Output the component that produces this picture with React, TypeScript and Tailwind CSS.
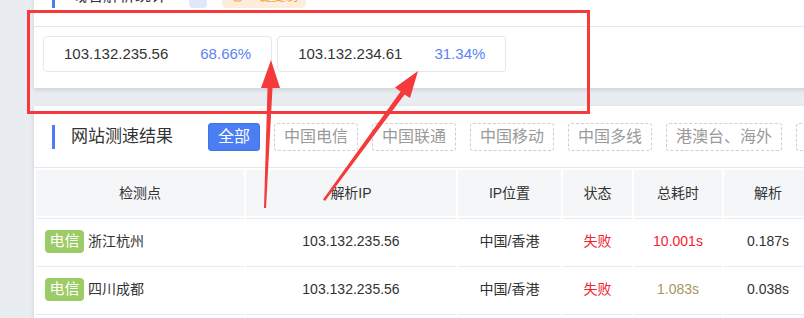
import React from 'react';
import { Copy } from 'lucide-react';

const ipStats = [
  { ip: '103.132.235.56', pct: '68.66%' },
  { ip: '103.132.234.61', pct: '31.34%' },
];

const lines = ['全部', '中国电信', '中国联通', '中国移动', '中国多线', '港澳台、海外', '其他'];

const rows = [
  { isp: '电信', city: '浙江杭州', ip: '103.132.235.56', loc: '中国/香港', status: '失败', total: '10.001s', slow: true, dns: '0.187s' },
  { isp: '电信', city: '四川成都', ip: '103.132.235.56', loc: '中国/香港', status: '失败', total: '1.083s', slow: false, dns: '0.038s' },
  { isp: '电信', city: '江苏南京', ip: '103.132.235.56', loc: '中国/香港', status: '失败', total: '0.912s', slow: false, dns: '0.041s' },
];

const thClass = 'h-[46px] bg-[#f5f6f8] text-[14px] font-normal text-[#333] text-center';
const tdClass = 'h-[46px] border-t border-[#e4ebf2] text-[14px] text-center';

function IpStat({ ip, pct }: { ip: string; pct: string }) {
  return (
    <div className="flex h-9 items-center gap-[32px] rounded border border-[#e4e7ec] pl-5 pr-5">
      <span className="text-[15px] text-[#333]">{ip}</span>
      <span className="text-[15px] text-[#5a84f5]">{pct}</span>
    </div>
  );
}

function Arrows() {
  return (
    <svg className="pointer-events-none absolute inset-0" width={804} height={318} viewBox="0 0 804 318">
      <polygon
        fill="#f43a3a"
        points="271,60 280,88 272.5,88 266,208 264,208 267.5,88 261,88"
      />
      <polygon
        fill="#f43a3a"
        points="418,71 410,98 404.6,94.5 325,201 323,199.5 400.6,91.5 395,87.5"
      />
    </svg>
  );
}

export default function App() {
  return (
    <div className="relative h-[318px] w-[804px] overflow-hidden bg-[#e9edf2] font-['Liberation_Sans','Noto_Sans_CJK_SC',sans-serif] text-[#333]">
      <div className="ml-[34px] -mt-[35px] flex w-[1000px] flex-col gap-[18px]">
        {/* 域名解析统计 */}
        <div className="bg-white shadow-[0_2px_5px_rgba(0,0,0,0.12)]">
          <div className="flex h-[62px] items-center border-b border-[#e4e7ec] pl-[18px]">
            <span className="h-6 w-[3px] bg-[#4b7cf3]" />
            <span className="ml-4 text-[16px]">域名解析统计</span>
            <span className="ml-[22px] flex h-6 w-[18px] items-center justify-center rounded bg-[#dfe8fb] text-[13px] text-[#4b7cf3]">
              2
            </span>
            <span className="ml-[15px] flex h-6 items-center gap-1 rounded bg-[#fdeedc] px-2 text-[13px] text-[#f39a36]">
              <Copy size={12} />
              一键复制
            </span>
          </div>
          <div className="flex gap-[5px] px-[9px] pt-[9px] pb-4">
            {ipStats.map((s) => (
              <IpStat key={s.ip} ip={s.ip} pct={s.pct} />
            ))}
          </div>
        </div>

        {/* 网站测速结果 */}
        <div className="bg-white shadow-[0_2px_5px_rgba(0,0,0,0.12)]">
          <div className="flex h-[62px] items-center border-b border-[#e4e7ec] pl-[18px]">
            <span className="h-6 w-[3px] bg-[#4b7cf3]" />
            <span className="ml-4 text-[17px]">网站测速结果</span>
            <div className="ml-[35px] flex gap-[14px]">
              {lines.map((l, i) => (
                <button
                  key={l}
                  className={
                    i === 0
                      ? 'h-7 rounded-[3px] border border-[#3f73e6] bg-[#4a7ef2] px-[9px] text-[16px] text-white'
                      : 'h-7 rounded-[3px] border border-dashed border-[#cfcfcf] bg-white px-[9px] text-[16px] text-[#9a9a9a]'
                  }
                >
                  {l}
                </button>
              ))}
            </div>
          </div>
          <table className="w-[900px] table-fixed border-separate border-spacing-0.5">
            <thead>
              <tr>
                <th className={`${thClass} w-[208px]`}>检测点</th>
                <th className={`${thClass} w-[210px]`}>解析IP</th>
                <th className={`${thClass} w-[103px]`}>IP位置</th>
                <th className={`${thClass} w-[69px]`}>状态</th>
                <th className={`${thClass} w-[88px]`}>总耗时</th>
                <th className={`${thClass} w-[88px]`}>解析</th>
                <th className={thClass}>连接</th>
              </tr>
            </thead>
            <tbody>
              {rows.map((r) => (
                <tr key={r.city}>
                  <td className={`${tdClass} pl-[9px] text-left`}>
                    <div className="flex items-center gap-1">
                      <span className="flex h-[23px] w-[39px] items-center justify-center rounded bg-[#9ccc65] text-[15px] text-white">
                        {r.isp}
                      </span>
                      <span>{r.city}</span>
                    </div>
                  </td>
                  <td className={tdClass}>{r.ip}</td>
                  <td className={tdClass}>{r.loc}</td>
                  <td className={`${tdClass} text-[#f5222d]`}>{r.status}</td>
                  <td className={`${tdClass} ${r.slow ? 'text-[#f5222d]' : 'text-[#a8965f]'}`}>{r.total}</td>
                  <td className={tdClass}>{r.dns}</td>
                  <td className={tdClass}>0.042s</td>
                </tr>
              ))}
            </tbody>
          </table>
        </div>
      </div>

      {/* annotation */}
      <div className="pointer-events-none absolute left-[27px] top-[10px] h-[104px] w-[563px] border-[3px] border-[#f43a3a]" />
      <Arrows />
    </div>
  );
}
